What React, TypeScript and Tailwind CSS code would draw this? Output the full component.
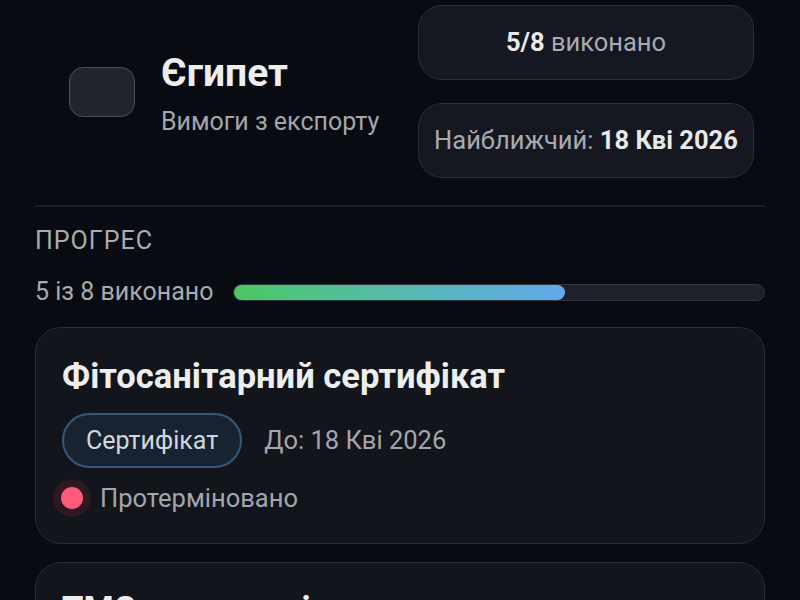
export default function App() {
    return (
        <div className="min-h-[600px] w-[800px] overflow-hidden bg-[#080b12] px-[35px] pt-[5px] font-['Roboto',sans-serif]">
            {/* Header */}
            <div className="flex items-center justify-between">
                <div className="flex items-center gap-[26px] pl-[34px]">
                    <div className="h-[50px] w-[66px] rounded-[14px] border border-[#4d5058] bg-[#22252d]" />
                    <div className="pt-[3px]">
                        <h1 className="text-[39px] font-bold leading-[46px] text-[#eceef0]">Єгипет</h1>
                        <p className="mt-[11px] text-[25px] leading-[30px] text-[#a3a6ac]">Вимоги з експорту</p>
                    </div>
                </div>
                <div className="flex flex-col gap-[23px] pr-[11px]">
                    <StatPill>
                        <span className="font-bold text-[#e8e9eb]">5/8</span> виконано
                    </StatPill>
                    <StatPill>
                        Найближчий: <span className="font-bold text-[#e8e9eb]">18 Кві 2026</span>
                    </StatPill>
                </div>
            </div>

            <div className="mt-[27px] h-[2px] bg-[#1c1f26]" />

            {/* Progress */}
            <p className="mt-[19px] text-[25px] leading-[30px] tracking-[1px] text-[#a8abb1]">ПРОГРЕС</p>
            <div className="mt-[21px] flex items-center gap-[20px]">
                <span className="shrink-0 text-[25px] leading-[30px] text-[#a8abb1]">5 із 8 виконано</span>
                <div className="h-[17px] flex-1 rounded-full border border-[#32353c] bg-[#1e2129]">
                    <div
                        className="h-full rounded-full bg-gradient-to-r from-[#4cc75f] to-[#62a9ec]"
                        style={{ width: `${(5 / 8) * 100}%` }}
                    />
                </div>
            </div>

            {/* Requirement cards */}
            <div className="mt-[20px] flex flex-col gap-[18px]">
                <div className="rounded-[26px] border border-[#2a2d34] bg-[#12151c] px-[26px] pb-[26px] pt-[28px]">
                    <h2 className="text-[34.5px] font-bold leading-[40px] text-[#eceef0]">Фітосанітарний сертифікат</h2>
                    <div className="mt-[17px] flex items-center gap-[22px]">
                        <span className="flex h-[55px] items-center rounded-full border-2 border-[#35597c] bg-[#182332] px-[22px] text-[25px] text-[#d3d7dd]">
                            Сертифікат
                        </span>
                        <span className="text-[25.5px] text-[#a3a6ac]">До: 18 Кві 2026</span>
                    </div>
                    <div className="-ml-[9px] mt-[11px] flex items-center gap-[9px]">
                        <span className="flex h-[38px] w-[38px] items-center justify-center rounded-full bg-[#2c1921]">
                            <span className="h-[22px] w-[22px] rounded-full bg-[#ff5a78]" />
                        </span>
                        <span className="text-[25.5px] leading-[30px] text-[#a3a6ac]">Протерміновано</span>
                    </div>
                </div>
                <div className="rounded-[26px] border border-[#2a2d34] bg-[#12151c] px-[26px] pb-[24px] pt-[26px]">
                    <h2 className="text-[34.5px] font-bold leading-[40px] text-[#eceef0]">ТМС декларація</h2>
                </div>
            </div>
        </div>
    );
}

function StatPill({ children }: { children: React.ReactNode }) {
    return (
        <div className="flex h-[75px] w-[336px] items-center justify-center rounded-[24px] border border-[#2b2e35] bg-[#151820] text-[25.5px] text-[#a8abb0]">
            <span>{children}</span>
        </div>
    );
}
